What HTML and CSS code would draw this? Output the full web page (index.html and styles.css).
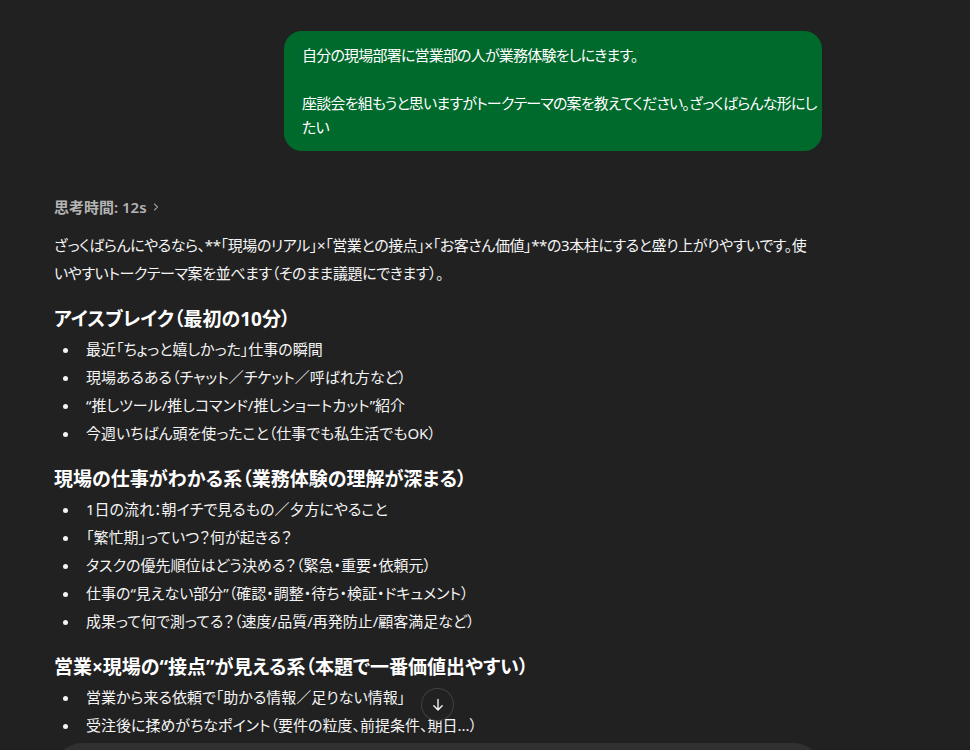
FILE: index.html
```html
<!DOCTYPE html>
<html lang="ja">
<head>
<meta charset="utf-8">
<title>座談会のトークテーマ</title>
<link rel="stylesheet" href="styles.css">
</head>
<body>
<main class="thread">
  <div class="column">
    <div class="user-row">
      <div class="bubble">
        <span class="line">自分の現場部署に営業部の人が業務体験をしにきます。</span>
        <span class="line">&nbsp;</span>
        <span class="line">座談会を組もうと思いますがトークテーマの案を教えてください。ざっくばらんな形にし</span>
        <span class="line">たい</span>
      </div>
    </div>

    <div class="answer">
      <div class="thought">思考時間: 12s
        <svg class="chev" width="10" height="10" viewBox="0 0 10 10"><path d="M3.5 2 L6.5 5 L3.5 8" fill="none" stroke="currentColor" stroke-width="1.1" stroke-linecap="round" stroke-linejoin="round"/></svg>
      </div>

      <p class="intro">
        <span class="line">ざっくばらんにやるなら、**「現場のリアル」×「営業との接点」×「お客さん価値」**の3本柱にすると盛り上がりやすいです。使</span>
        <span class="line">いやすいトークテーマ案を並べます（そのまま議題にできます）。</span>
      </p>

      <h3>アイスブレイク（最初の10分）</h3>
      <ul>
        <li>最近「ちょっと嬉しかった」仕事の瞬間</li>
        <li>現場あるある（チャット／チケット／呼ばれ方など）</li>
        <li>“推しツール/推しコマンド/推しショートカット”紹介</li>
        <li>今週いちばん頭を使ったこと（仕事でも私生活でもOK）</li>
      </ul>

      <h3>現場の仕事がわかる系（業務体験の理解が深まる）</h3>
      <ul>
        <li>1日の流れ：朝イチで見るもの／夕方にやること</li>
        <li>「繁忙期」っていつ？何が起きる？</li>
        <li>タスクの優先順位はどう決める？（緊急・重要・依頼元）</li>
        <li>仕事の“見えない部分”（確認・調整・待ち・検証・ドキュメント）</li>
        <li>成果って何で測ってる？（速度/品質/再発防止/顧客満足など）</li>
      </ul>

      <h3>営業×現場の“接点”が見える系（本題で一番価値出やすい）</h3>
      <ul>
        <li>営業から来る依頼で「助かる情報／足りない情報」</li>
        <li>受注後に揉めがちなポイント（要件の粒度、前提条件、期日...）</li>
      </ul>
    </div>
  </div>
</main>

<button class="scroll-down" aria-label="最下部へ">
  <svg width="16" height="16" viewBox="0 0 16 16"><path d="M8 2.5 V13 M3.8 8.8 L8 13 L12.2 8.8" fill="none" stroke="currentColor" stroke-width="1.4" stroke-linecap="round" stroke-linejoin="round"/></svg>
</button>

<div class="composer"></div>
</body>
</html>
```

FILE: styles.css
```css
* {
  box-sizing: border-box;
}

html, body {
  margin: 0;
  height: 100%;
  overflow: hidden;
  background: #212121;
}

body {
  font-family: "Noto Sans", "Noto Sans CJK JP", sans-serif;
  font-feature-settings: "palt";
  font-size: 15px;
  color: #f4f4f4;
}

.thread {
  width: 876px;
  padding-top: 31px;
}

.column {
  width: 768px;
  margin: 0 auto;
}

.line {
  display: block;
  white-space: nowrap;
}

.user-row {
  display: flex;
  justify-content: flex-end;
}

.bubble {
  width: 538px;
  background: #00692c;
  color: #ffffff;
  border-radius: 18px;
  padding: 12px 18px;
  line-height: 24px;
  letter-spacing: -0.8px;
}

.thought {
  display: flex;
  align-items: center;
  gap: 4px;
  margin-top: 46px;
  font-size: 15px;
  line-height: 20px;
  font-weight: 600;
  color: #b4b4b4;
}

.chev {
  color: #9a9a9a;
}

.answer p {
  margin: 14px 0 0;
  line-height: 28px;
}

.intro {
  letter-spacing: -0.4px;
}

.answer h3 {
  margin: 16px 0 0;
  font-size: 19px;
  line-height: 32px;
  font-weight: 700;
  color: #ffffff;
}

.answer ul {
  margin: 0;
  padding-left: 26px;
  line-height: 28px;
}

.answer li {
  padding-left: 6px;
}

.scroll-down {
  position: fixed;
  left: 421px;
  top: 688px;
  width: 33px;
  height: 33px;
  border-radius: 50%;
  border: 1px solid rgba(255, 255, 255, 0.14);
  background: #212121;
  color: #f2f2f2;
  padding: 0;
  display: flex;
  align-items: center;
  justify-content: center;
}

.composer {
  position: fixed;
  left: 54px;
  top: 743px;
  width: 768px;
  height: 110px;
  border-radius: 28px;
  background: #303030;
}
```
